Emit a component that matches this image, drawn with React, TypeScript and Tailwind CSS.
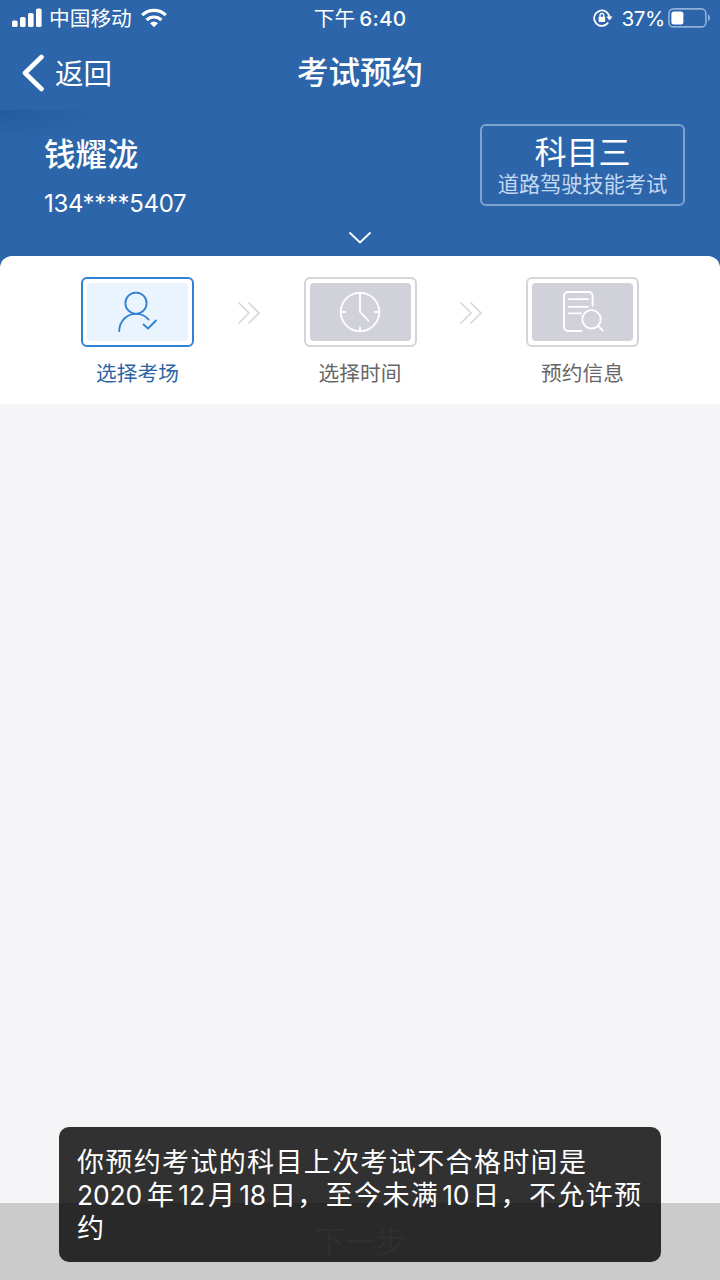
import clsx from "clsx";
import type { ReactNode } from "react";

interface Step {
  label: string;
  icon: ReactNode;
  active?: boolean;
}

function SignalIcon() {
  return (
    <svg width="30" height="20" viewBox="0 0 30 20" fill="currentColor">
      <rect x="0" y="12.5" width="5.6" height="6.5" rx="1.6" />
      <rect x="8" y="9" width="5.6" height="10" rx="1.6" />
      <rect x="16" y="5" width="5.6" height="14" rx="1.6" />
      <rect x="24" y="0.5" width="5.6" height="18.5" rx="1.6" />
    </svg>
  );
}

function WifiIcon() {
  return (
    <svg width="26" height="20" viewBox="0 0 26 20" fill="none" stroke="currentColor" strokeWidth="3.2">
      <path d="M1.2 7.2a16.8 16.8 0 0 1 23.6 0" />
      <path d="M5.6 12a10.6 10.6 0 0 1 14.8 0" />
      <path d="M13 19.2l-4-4a5.8 5.8 0 0 1 8 0z" fill="currentColor" stroke="none" />
    </svg>
  );
}

function RotationLockIcon() {
  return (
    <svg width="20" height="20" viewBox="0 0 20 20" fill="none" stroke="currentColor" strokeWidth="1.7">
      <path d="M15.2 14.6a7.7 7.7 0 1 1 1.3-5.4" />
      <path d="M13.4 8.6h6.2l-3.1 4z" fill="currentColor" stroke="none" />
      <rect x="5.6" y="8.8" width="6.6" height="5.2" rx="0.8" fill="currentColor" stroke="none" />
      <path d="M7 9V7.4a1.9 1.9 0 0 1 3.8 0V9" strokeWidth="1.3" />
    </svg>
  );
}

function BatteryIcon() {
  return (
    <svg width="43" height="20" viewBox="0 0 43 20" fill="none">
      <rect x="0.9" y="0.9" width="37" height="18" rx="4.5" stroke="#8fb0d8" strokeWidth="1.6" />
      <rect x="3.4" y="3.4" width="12" height="13" rx="2.5" fill="#fff" />
      <path d="M40 6.6c2.6 1 2.6 5.8 0 6.8z" fill="#8fb0d8" />
    </svg>
  );
}

function UserCheckIcon() {
  return (
    <svg width="40" height="42" viewBox="0 0 40 42" fill="none" stroke="#2f80d0" strokeWidth="1.8" strokeLinecap="round" strokeLinejoin="round">
      <circle cx="18" cy="12.2" r="10.6" />
      <path d="M1.2 40C1.6 29.6 9 22.8 18 22.8c5 0 9.4 1.9 12.6 5.8" />
      <path d="M25.5 33.5l4.6 4L38 29.5" />
    </svg>
  );
}

function ClockIcon() {
  return (
    <svg width="42" height="42" viewBox="0 0 42 42" fill="none" stroke="#fff" strokeWidth="1.8" strokeLinecap="round">
      <circle cx="21" cy="21" r="19.2" />
      <path d="M21 2.5V21l8.6 8.8M2 21h4M36 21h4M21 36.5V40" />
    </svg>
  );
}

function DocSearchIcon() {
  return (
    <svg width="42" height="42" viewBox="0 0 42 42" fill="none" stroke="#fff" strokeWidth="1.8" strokeLinecap="round">
      <path d="M30.6 14.5V5a4 4 0 0 0-4-4H6a4 4 0 0 0-4 4v31a4 4 0 0 0 4 4h13.5" />
      <path d="M7 8.2h19M7 15.8h19M7 22.4h12" />
      <circle cx="29.5" cy="28.3" r="9.2" />
      <path d="M36 34.8l4.8 4.8" />
    </svg>
  );
}

function DoubleArrow() {
  return (
    <svg className="mt-6" width="24" height="24" viewBox="0 0 24 24" fill="none" stroke="#d8d8dc" strokeWidth="1.7">
      <path d="M1.5 1.5L12 12 1.5 22.5M11.5 1.5L22 12 11.5 22.5" />
    </svg>
  );
}

const steps: Step[] = [
  { label: "选择考场", icon: <UserCheckIcon />, active: true },
  { label: "选择时间", icon: <ClockIcon /> },
  { label: "预约信息", icon: <DocSearchIcon /> },
];

function StepCard({ label, icon, active }: Step) {
  return (
    <div className="flex w-[113px] flex-col items-center">
      <div
        className={clsx(
          "h-[70px] w-[113px] rounded-md border-2 p-1",
          active ? "border-[#3182d2]" : "border-[#d4d5da]"
        )}
      >
        <div
          className={clsx(
            "flex h-full items-center justify-center rounded",
            active ? "bg-[#eaf4fe]" : "bg-[#d1d2d9]"
          )}
        >
          {icon}
        </div>
      </div>
      <span
        className={clsx(
          "mt-3 text-[20.7px] leading-[30px] whitespace-nowrap",
          active ? "text-[#2d64a6]" : "text-[#666]"
        )}
      >
        {label}
      </span>
    </div>
  );
}

// digits inside the toast copy, set a little tighter than the hanzi
function Num({ children }: { children: ReactNode }) {
  return <span className="mr-[3px] ml-[3px] text-[26.5px] tracking-[-0.2px]">{children}</span>;
}

export default function App() {
  return (
    <div className="relative flex h-[1280px] w-[720px] flex-col overflow-hidden bg-[#f5f5f8] font-[Inter,'Noto_Sans_CJK_SC',sans-serif]">
      <header className="h-[268px] shrink-0 bg-[#2c65a9] text-white">
        {/* status bar */}
        <div className="grid h-9 grid-cols-3 items-center pr-[9px] pl-3 text-[20.7px] leading-8">
          <div className="flex items-center">
            <SignalIcon />
            <span className="mt-0.5 ml-[7px]">中国移动</span>
            <span className="ml-[9px]">
              <WifiIcon />
            </span>
          </div>
          <div className="mt-0.5 -ml-[3px] text-center whitespace-nowrap">
            下午<span className="ml-1 font-medium tracking-[0.2px]">6:40</span>
          </div>
          <div className="flex items-center justify-end">
            <RotationLockIcon />
            <span className="mt-0.5 mr-[3px] ml-2 tracking-[-0.4px]">37%</span>
            <BatteryIcon />
          </div>
        </div>

        {/* nav bar */}
        <div className="grid h-[74px] grid-cols-3 items-center px-[22px]">
          <button className="flex items-center text-[28.5px] leading-10">
            <svg width="23" height="38" viewBox="0 0 23 38" fill="none" stroke="currentColor" strokeWidth="4.6" strokeLinecap="round" strokeLinejoin="round">
              <path d="M19.5 3L3 19l16.5 16" />
            </svg>
            <span className="mt-0.5 ml-2.5">返回</span>
          </button>
          <h1 className="text-center text-[31.5px] leading-10 font-medium">考试预约</h1>
        </div>

        {/* applicant */}
        <div className="flex justify-between bg-[radial-gradient(ellipse_110px_30px_at_0_0,#265c9f,transparent)] pt-[14px] pr-[35px] pl-11">
          <div className="pt-[9px]">
            <div className="text-[31.5px] leading-[44px] font-medium">钱耀泷</div>
            <div className="mt-[11px] text-[24px] leading-[32px] tracking-[-0.35px]">134****5407</div>
          </div>
          <div className="flex h-[82px] w-[205px] flex-col items-center rounded-md border-2 border-[#7fa3cf] pt-[9px]">
            <span className="text-[32px] leading-9">科目三</span>
            <span className="text-[21.2px] leading-[26px] whitespace-nowrap text-[#c3d8f2]">道路驾驶技能考试</span>
          </div>
        </div>
        <div className="mt-[11px] flex justify-center">
          <svg width="24" height="14" viewBox="0 0 24 14" fill="none" stroke="currentColor" strokeWidth="1.8">
            <path d="M1.5 1.5L12 11.5 22.5 1.5" />
          </svg>
        </div>
      </header>

      <section className="relative -mt-3 flex h-[148px] shrink-0 items-start justify-between rounded-t-xl bg-white px-[81px] pt-[21px]">
        <StepCard {...steps[0]} />
        <DoubleArrow />
        <StepCard {...steps[1]} />
        <DoubleArrow />
        <StepCard {...steps[2]} />
      </section>

      <main className="flex-1" />

      <button className="h-[77px] shrink-0 bg-[#cbcbcb] text-[30.5px] text-[#e8e8e8]">下一步</button>

      {/* toast */}
      <div className="absolute top-[1127px] left-[59px] h-[135px] w-[602px] rounded-[10px] bg-black/80 pt-[19px] pl-[18px] text-[27px] leading-[33px] tracking-[1.35px] whitespace-nowrap text-white">
        <p>你预约考试的科目上次考试不合格时间是</p>
        <p>
          <span className="mr-[5px] text-[26.5px] tracking-[-0.2px]">2020</span>年<Num>12</Num>月<Num>18</Num>
          日，至今未满<Num>10</Num>日，不允许预
        </p>
        <p>约</p>
      </div>
    </div>
  );
}
